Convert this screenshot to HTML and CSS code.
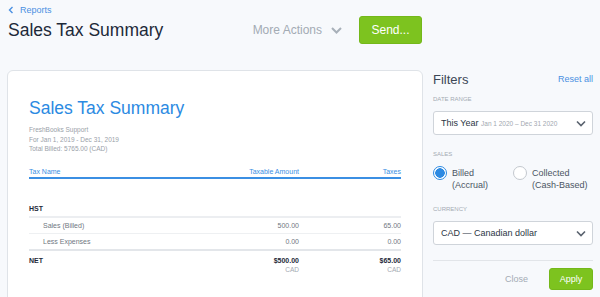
FILE: index.html
```html
<!DOCTYPE html>
<html>
  <head>
    <title>Sales Tax Summary</title>
    <link rel="stylesheet" href="styles.css">
  </head>
  <body>
    <header class="top">
      <a class="back" href="#">
        <svg width="6" height="8" viewBox="0 0 6 8"><path d="M4.5 1 L1.5 4 L4.5 7" fill="none" stroke="#4a90e2" stroke-width="1.4"/></svg>
        Reports
      </a>
      <div class="title-row">
        <h1>Sales Tax Summary</h1>
        <div class="actions">
          <span class="more">More Actions
            <svg width="11" height="7" viewBox="0 0 11 7"><path d="M1 1 L5.5 5.5 L10 1" fill="none" stroke="#a8b0b9" stroke-width="2"/></svg>
          </span>
          <button class="btn-green send">Send...</button>
        </div>
      </div>
    </header>

    <div class="main">
      <section class="report">
        <h2 class="report-title">Sales Tax Summary</h2>
        <div class="meta">
          <div>FreshBooks Support</div>
          <div>For Jan 1, 2019 - Dec 31, 2019</div>
          <div>Total Billed: 5765.00 (CAD)</div>
        </div>

        <div class="row head">
          <span class="col-name">Tax Name</span>
          <span class="col-amt">Taxable Amount</span>
          <span class="col-tax">Taxes</span>
        </div>
        <div class="row group">
          <span class="col-name">HST</span>
        </div>
        <div class="row item first">
          <span class="col-name">Sales (Billed)</span>
          <span class="col-amt">500.00</span>
          <span class="col-tax">65.00</span>
        </div>
        <div class="row item">
          <span class="col-name">Less Expenses</span>
          <span class="col-amt">0.00</span>
          <span class="col-tax">0.00</span>
        </div>
        <div class="row total">
          <span class="col-name">NET</span>
          <span class="col-amt"><b>$500.00</b><small>CAD</small></span>
          <span class="col-tax"><b>$65.00</b><small>CAD</small></span>
        </div>
      </section>

      <aside class="filters">
        <div class="filters-head">
          <span class="filters-title">Filters</span>
          <a class="reset" href="#">Reset all</a>
        </div>

        <div class="label">Date Range</div>
        <div class="select">
          <span>This Year <small>Jan 1 2020 – Dec 31 2020</small></span>
          <svg width="10" height="7" viewBox="0 0 10 7"><path d="M1 1.5 L5 5.5 L9 1.5" fill="none" stroke="#59626e" stroke-width="1.6"/></svg>
        </div>

        <div class="label sales">Sales</div>
        <div class="radios">
          <div class="radio">
            <span class="dot on"></span>
            <span>Billed<br>(Accrual)</span>
          </div>
          <div class="radio">
            <span class="dot"></span>
            <span>Collected<br>(Cash-Based)</span>
          </div>
        </div>

        <div class="label currency">Currency</div>
        <div class="select">
          <span>CAD — Canadian dollar</span>
          <svg width="10" height="7" viewBox="0 0 10 7"><path d="M1 1.5 L5 5.5 L9 1.5" fill="none" stroke="#59626e" stroke-width="1.6"/></svg>
        </div>

        <div class="filter-foot">
          <a class="close" href="#">Close</a>
          <button class="btn-green apply">Apply</button>
        </div>
      </aside>
    </div>
  </body>
</html>
```

FILE: styles.css
```css
body {
  margin: 0;
  background: #f7f9fc;
  font-family: "Liberation Sans", Arial, sans-serif;
  color: #1f2b3a;
  height: 297px;
  overflow: hidden;
}

a {
  text-decoration: none;
}

.top {
  padding: 4px 8px 0 8px;
  width: 414px;
}

.back {
  display: flex;
  align-items: center;
  gap: 6px;
  height: 12px;
  font-size: 9px;
  color: #4a90e2;
}

.title-row {
  display: flex;
  align-items: center;
  height: 28px;
}

h1 {
  margin: 0;
  font-size: 17.5px;
  font-weight: normal;
  color: #1d2939;
  flex: 1;
}

.actions {
  display: flex;
  align-items: center;
}

.more {
  display: flex;
  align-items: center;
  gap: 9px;
  font-size: 12px;
  color: #a3abb4;
  margin-right: 17px;
}

.btn-green {
  background: #7dc31f;
  border: 1px solid #74b81a;
  border-radius: 3px;
  color: #fff;
  font-family: inherit;
  padding: 0;
  cursor: pointer;
}

.send {
  width: 63px;
  height: 28px;
  font-size: 12px;
}

.main {
  display: flex;
  margin-top: 26px;
  padding-left: 7px;
}

.report {
  width: 372px;
  height: 300px;
  background: #fff;
  border: 1px solid #dfe3e8;
  border-radius: 6px;
  padding: 27px 21px 0 21px;
}

.report-title {
  margin: 0;
  font-size: 17.5px;
  line-height: 20px;
  font-weight: normal;
  color: #2b8ae2;
}

.meta {
  margin-top: 7px;
  font-size: 6.5px;
  line-height: 9.5px;
  color: #9aa1a9;
}

.row {
  display: flex;
  font-size: 7px;
}

.col-name {
  flex: 1;
}

.col-amt {
  width: 100px;
  text-align: right;
}

.col-tax {
  width: 102px;
  text-align: right;
}

.row.head {
  margin-top: 13px;
  line-height: 10px;
  color: #3a8ee2;
  border-bottom: 2px solid #3b8fe3;
}

.row.group {
  margin-top: 25px;
  line-height: 10px;
  padding-bottom: 2px;
  font-weight: bold;
  color: #1d2939;
}

.row.item {
  line-height: 15px;
  color: #6f777f;
  border-top: 1px solid #eef0f2;
}

.row.item .col-name {
  padding-left: 14px;
}

.row.item.first {
  border-top: 2px solid #eceef1;
}

.row.total {
  border-top: 2px solid #e3e6ea;
  padding-top: 5px;
  line-height: 10px;
  font-weight: bold;
  color: #1d2939;
}

.row.total b {
  display: block;
}

.row.total small {
  display: block;
  font-size: 6.5px;
  line-height: 8px;
  font-weight: normal;
  color: #a3aab2;
}

.filters {
  width: 160px;
  margin-left: 10px;
}

.filters-head {
  display: flex;
  align-items: center;
  justify-content: space-between;
  height: 18px;
}

.filters-title {
  font-size: 13px;
  color: #3c4756;
}

.reset {
  font-size: 9px;
  color: #4a90e2;
}

.label {
  margin-top: 7px;
  font-size: 6px;
  line-height: 8px;
  text-transform: uppercase;
  color: #a4abb3;
}

.select {
  margin-top: 8px;
  height: 22px;
  border: 1px solid #cfd4da;
  border-radius: 3px;
  background: #fff;
  display: flex;
  align-items: center;
  justify-content: space-between;
  padding: 0 6px 0 7px;
  font-size: 9px;
  color: #2c3644;
}

.select small {
  font-size: 6.5px;
  color: #a1a8b0;
}

.label.sales {
  margin-top: 15px;
}

.radios {
  display: flex;
  margin-top: 9px;
}

.radio {
  display: flex;
  gap: 5px;
  width: 80px;
  font-size: 9px;
  line-height: 12px;
  color: #4b5563;
}

.dot {
  width: 14px;
  height: 14px;
  margin-top: -1px;
  border: 1.5px solid #c3c8ce;
  border-radius: 50%;
  background: #fff;
  box-sizing: border-box;
  flex: none;
}

.dot.on {
  border-color: #2d8ae2;
  background: radial-gradient(circle, #2d8ae2 0 4.5px, #fff 5px);
}

.label.currency {
  margin-top: 14px;
}

.filter-foot {
  margin-top: 15px;
  border-top: 1px solid #e2e5e9;
  padding-top: 7px;
  display: flex;
  align-items: center;
  justify-content: flex-end;
  gap: 21px;
}

.close {
  font-size: 9px;
  color: #a3abb4;
}

.apply {
  width: 44px;
  height: 22px;
  font-size: 9px;
}
```
